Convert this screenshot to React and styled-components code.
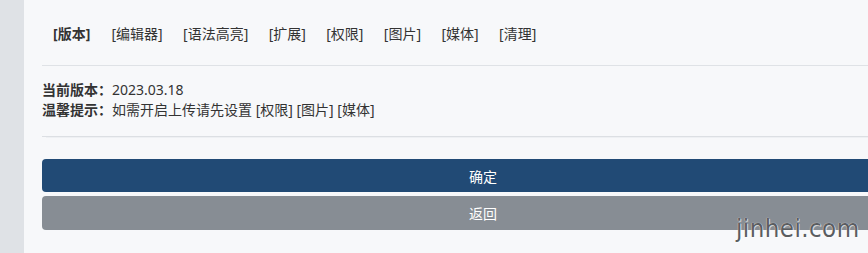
import React from "react";
import styled, { createGlobalStyle } from "styled-components";

const GlobalStyle = createGlobalStyle`
  html, body {
    margin: 0;
    padding: 0;
    overflow: hidden;
    background: #dfe2e6;
  }
  body {
    font-family: "Noto Sans", "Noto Sans CJK SC", sans-serif;
    font-size: 14px;
    color: #333;
  }
`;

const Page = styled.div`
  position: relative;
  display: flex;
  width: 868px;
  height: 253px;
  overflow: hidden;
`;

const Sidebar = styled.div`
  width: 24px;
  flex-shrink: 0;
  background: #dfe2e6;
`;

const Panel = styled.div`
  width: 918px;
  flex-shrink: 0;
  background: #f7f8fa;
  padding: 0 18px;
  box-sizing: border-box;
`;

const Tabs = styled.nav`
  display: flex;
  padding: 24px 0 21px;
  border-bottom: 1px solid #dfe2e6;
`;

const Tab = styled.a`
  padding: 0 ${(p) => (p.$active ? 11 : 10.2)}px;
  line-height: 20px;
  color: #333;
  font-weight: ${(p) => (p.$active ? 700 : 400)};
  text-decoration: none;
  cursor: pointer;
`;

const Info = styled.div`
  padding: 14px 0 16px;
  border-bottom: 1px solid #dcdfe3;
  box-shadow: 0 5px 0 -4px #eef0f3;
`;

const Line = styled.div`
  line-height: 20px;
`;

const Label = styled.b`
  font-weight: 700;
`;

const Actions = styled.div`
  display: flex;
  flex-direction: column;
  gap: 4px;
  padding-top: 22px;
`;

const Button = styled.button`
  height: ${(p) => p.$h}px;
  border: none;
  border-radius: 4px;
  background: ${(p) => (p.$variant === "primary" ? "#214a75" : "#878d94")};
  color: #fff;
  font-family: inherit;
  font-size: 14px;
  cursor: pointer;
`;

const Watermark = styled.div`
  position: absolute;
  left: 736px;
  top: 214px;
  font-family: "DejaVu Sans", sans-serif;
  font-size: 25px;
  letter-spacing: 0.5px;
  color: #5a5d61;
  transform: scaleX(0.92);
  transform-origin: left center;
  text-shadow: 0 0 1px #fff, 1px 1px 0 rgba(255, 255, 255, 0.6);
  pointer-events: none;
`;

const tabs = ["版本", "编辑器", "语法高亮", "扩展", "权限", "图片", "媒体", "清理"];

export default function App() {
  return (
    <>
      <GlobalStyle />
      <Page>
        <Sidebar />
        <Panel>
          <Tabs>
            {tabs.map((t, i) => (
              <Tab key={t} $active={i === 0}>
                [{t}]
              </Tab>
            ))}
          </Tabs>
          <Info>
            <Line>
              <Label>当前版本：</Label>2023.03.18
            </Line>
            <Line>
              <Label>温馨提示：</Label>如需开启上传请先设置 [权限] [图片] [媒体]
            </Line>
          </Info>
          <Actions>
            <Button $variant="primary" $h={33}>确定</Button>
            <Button $h={34}>返回</Button>
          </Actions>
        </Panel>
        <Watermark>jinhei.com</Watermark>
      </Page>
    </>
  );
}
